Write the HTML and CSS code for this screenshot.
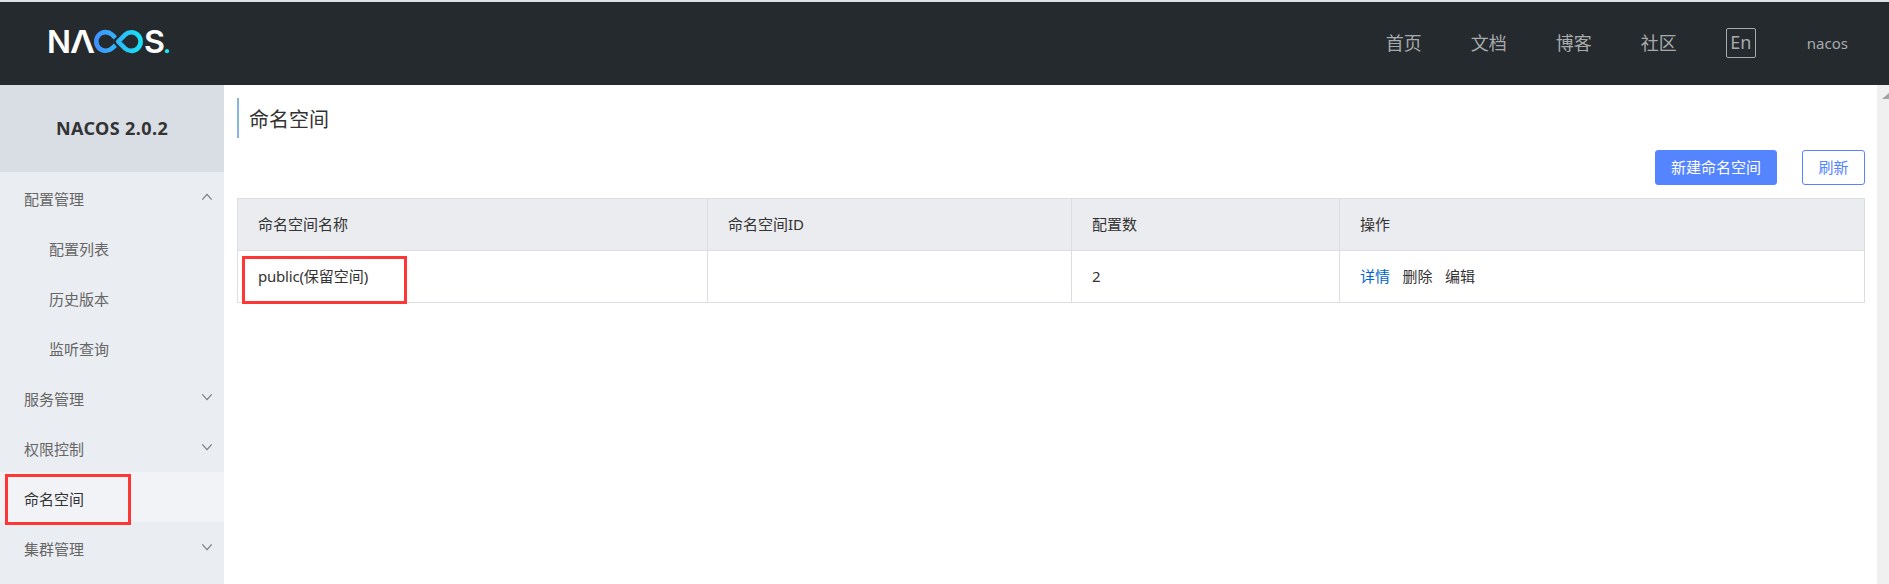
FILE: index.html
```html
<!DOCTYPE html>
<html lang="zh-CN">
<head>
<meta charset="utf-8">
<title>Nacos</title>
<link rel="stylesheet" href="styles.css">
</head>
<body>
<header class="header">
  <svg class="logo" width="128" height="48" viewBox="45 18 128 48" role="img" aria-label="Nacos">
    <defs>
      <linearGradient id="loop" gradientUnits="userSpaceOnUse" x1="93" y1="0" x2="144" y2="0">
        <stop offset="0" stop-color="#448cff"/>
        <stop offset="1" stop-color="#17e6f4"/>
      </linearGradient>
    </defs>
    <g class="logo-text">
      <text x="47" y="53" textLength="24" lengthAdjust="spacingAndGlyphs">N</text>
      <text x="70" y="53" textLength="25" lengthAdjust="spacingAndGlyphs">Λ</text>
      <text x="144" y="53" textLength="21" lengthAdjust="spacingAndGlyphs">S</text>
    </g>
    <g fill="none" stroke="url(#loop)" stroke-width="4.6">
      <path d="M115.4 37.8 L112 34.6 A9.4 9.3 0 1 0 111.8 48.5 L115.4 45.2"/>
      <path d="M118.2 41.6 L125 34.8 A9.3 9.3 0 1 1 125 48.4 Z" stroke-linejoin="round"/>
    </g>
    <circle cx="167" cy="51.2" r="2.1" fill="#17e6f4"/>
  </svg>
  <nav class="nav">
    <a>首页</a><a>文档</a><a>博客</a><a>社区</a>
    <span class="lang">En</span>
    <span class="user">nacos</span>
  </nav>
</header>
<div class="body">
  <aside class="sidebar">
    <h1 class="product">NACOS 2.0.2</h1>
    <ul class="menu">
      <li>配置管理<svg class="chev" width="12" height="8" viewBox="0 0 12 8"><path d="M1.3 6.6 6 1.4l4.7 5.2"/></svg></li>
      <li class="sub">配置列表</li>
      <li class="sub">历史版本</li>
      <li class="sub">监听查询</li>
      <li>服务管理<svg class="chev" width="12" height="8" viewBox="0 0 12 8"><path d="M1.3 1.4 6 6.6l4.7-5.2"/></svg></li>
      <li>权限控制<svg class="chev" width="12" height="8" viewBox="0 0 12 8"><path d="M1.3 1.4 6 6.6l4.7-5.2"/></svg></li>
      <li class="active">命名空间<span class="mark mark-menu"></span></li>
      <li>集群管理<svg class="chev" width="12" height="8" viewBox="0 0 12 8"><path d="M1.3 1.4 6 6.6l4.7-5.2"/></svg></li>
    </ul>
  </aside>
  <main class="main">
    <h2 class="title">命名空间</h2>
    <div class="actions">
      <button class="btn primary">新建命名空间</button>
      <button class="btn">刷新</button>
    </div>
    <table class="table">
      <colgroup><col class="c-name"><col class="c-id"><col class="c-count"><col></colgroup>
      <thead><tr><th>命名空间名称</th><th>命名空间ID</th><th>配置数</th><th>操作</th></tr></thead>
      <tbody><tr>
        <td class="name"><span class="latin">public(</span>保留空间)<span class="mark mark-row"></span></td>
        <td></td>
        <td>2</td>
        <td><div class="ops"><a class="link">详情</a><span>删除</span><span>编辑</span></div></td>
      </tr></tbody>
    </table>
  </main>
  <div class="scrollbar"><svg width="12" height="20" viewBox="0 0 12 20"><path d="M5 14 12 8v6z" fill="#a3a3a3"/></svg></div>
</div>
</body>
</html>
```
FILE: styles.css
```css
* { box-sizing: border-box; }
body {
  margin: 0;
  height: 584px;
  overflow: hidden;
  display: flex;
  flex-direction: column;
  font: 15px/20px "Noto Sans", "Noto Sans CJK SC", sans-serif;
  color: #333;
  background: #fff;
}
.header {
  flex: none;
  height: 85px;
  border-top: 2px solid #dee1e6;
  background: #252a2f;
  display: flex;
  justify-content: space-between;
  padding: 16px 41px 0 45px;
}
.logo { display: block; }
.logo-text { font: 600 31.5px/1 Inter, sans-serif; fill: #fff; }
.nav {
  display: flex;
  height: 30px;
  margin-top: 10px;
  align-items: center;
  font-size: 18px;
  color: #a8aaac;
}
.nav a { margin-right: 49px; }
.lang {
  width: 30px;
  height: 30px;
  border: 1px solid #a8aaac;
  border-radius: 2px;
  line-height: 26px;
  text-align: center;
  margin-right: 51px;
}
.user { font-size: 15px; }
.body { flex: 1; min-height: 0; display: flex; }
.sidebar { width: 224px; background: #eaedf1; }
.product {
  margin: 0;
  height: 87px;
  background: #d9dde4;
  font-size: 18px;
  font-weight: 700;
  letter-spacing: .4px;
  line-height: 87px;
  text-align: center;
}
.menu { list-style: none; margin: 0; padding: 0; color: #666; }
.menu li {
  position: relative;
  height: 50px;
  padding: 3px 12px 0 24px;
  display: flex;
  align-items: center;
  justify-content: space-between;
}
.menu .sub { padding-left: 49px; }
.menu .active { background: #f2f3f7; color: #333; }
.chev { fill: none; stroke: #777; stroke-width: 1.1; margin: 0 -1px 4px 0; }
.mark { position: absolute; border: 3px solid #fd3636; }
.mark-menu { left: 5px; top: 2px; width: 126px; height: 51px; z-index: 1; }
.mark-row { left: 4px; top: 5px; width: 165px; height: 48px; }
.main { flex: 1; padding: 13px 12px 0 13px; }
.title {
  margin: 0;
  height: 40px;
  padding-left: 10px;
  border-left: 2px solid #86b5de;
  font-size: 20px;
  font-weight: 400;
  line-height: 43px;
}
.actions { display: flex; justify-content: flex-end; gap: 25px; padding: 12px 0 13px; }
.btn {
  height: 35px;
  padding: 0 15.5px;
  border: 1px solid #5584ff;
  border-radius: 3px;
  background: #fff;
  color: #5584ff;
  font: inherit;
  line-height: 31px;
  white-space: nowrap;
}
.primary { padding: 0 15px; background: #5584ff; color: #fff; }
.table { width: 1628px; border-collapse: separate; border-spacing: 0; table-layout: fixed; border: solid #dcdee3; border-width: 1px 0 0 1px; }
.c-name { width: 470px; }
.c-id { width: 364px; }
.c-count { width: 268px; }
.table th, .table td {
  height: 52px;
  padding: 0 20px 1px;
  border: solid #dcdee3;
  border-width: 0 1px 1px 0;
  font-weight: 400;
  text-align: left;
}
.table th { background: #ebecf0; }
.name { position: relative; }
.latin { letter-spacing: -.2px; }
.ops { display: flex; gap: 12.5px; }
.link { color: #06c; }
.scrollbar { width: 12px; background: #f0f0f0; }
.scrollbar svg { display: block; }
```
